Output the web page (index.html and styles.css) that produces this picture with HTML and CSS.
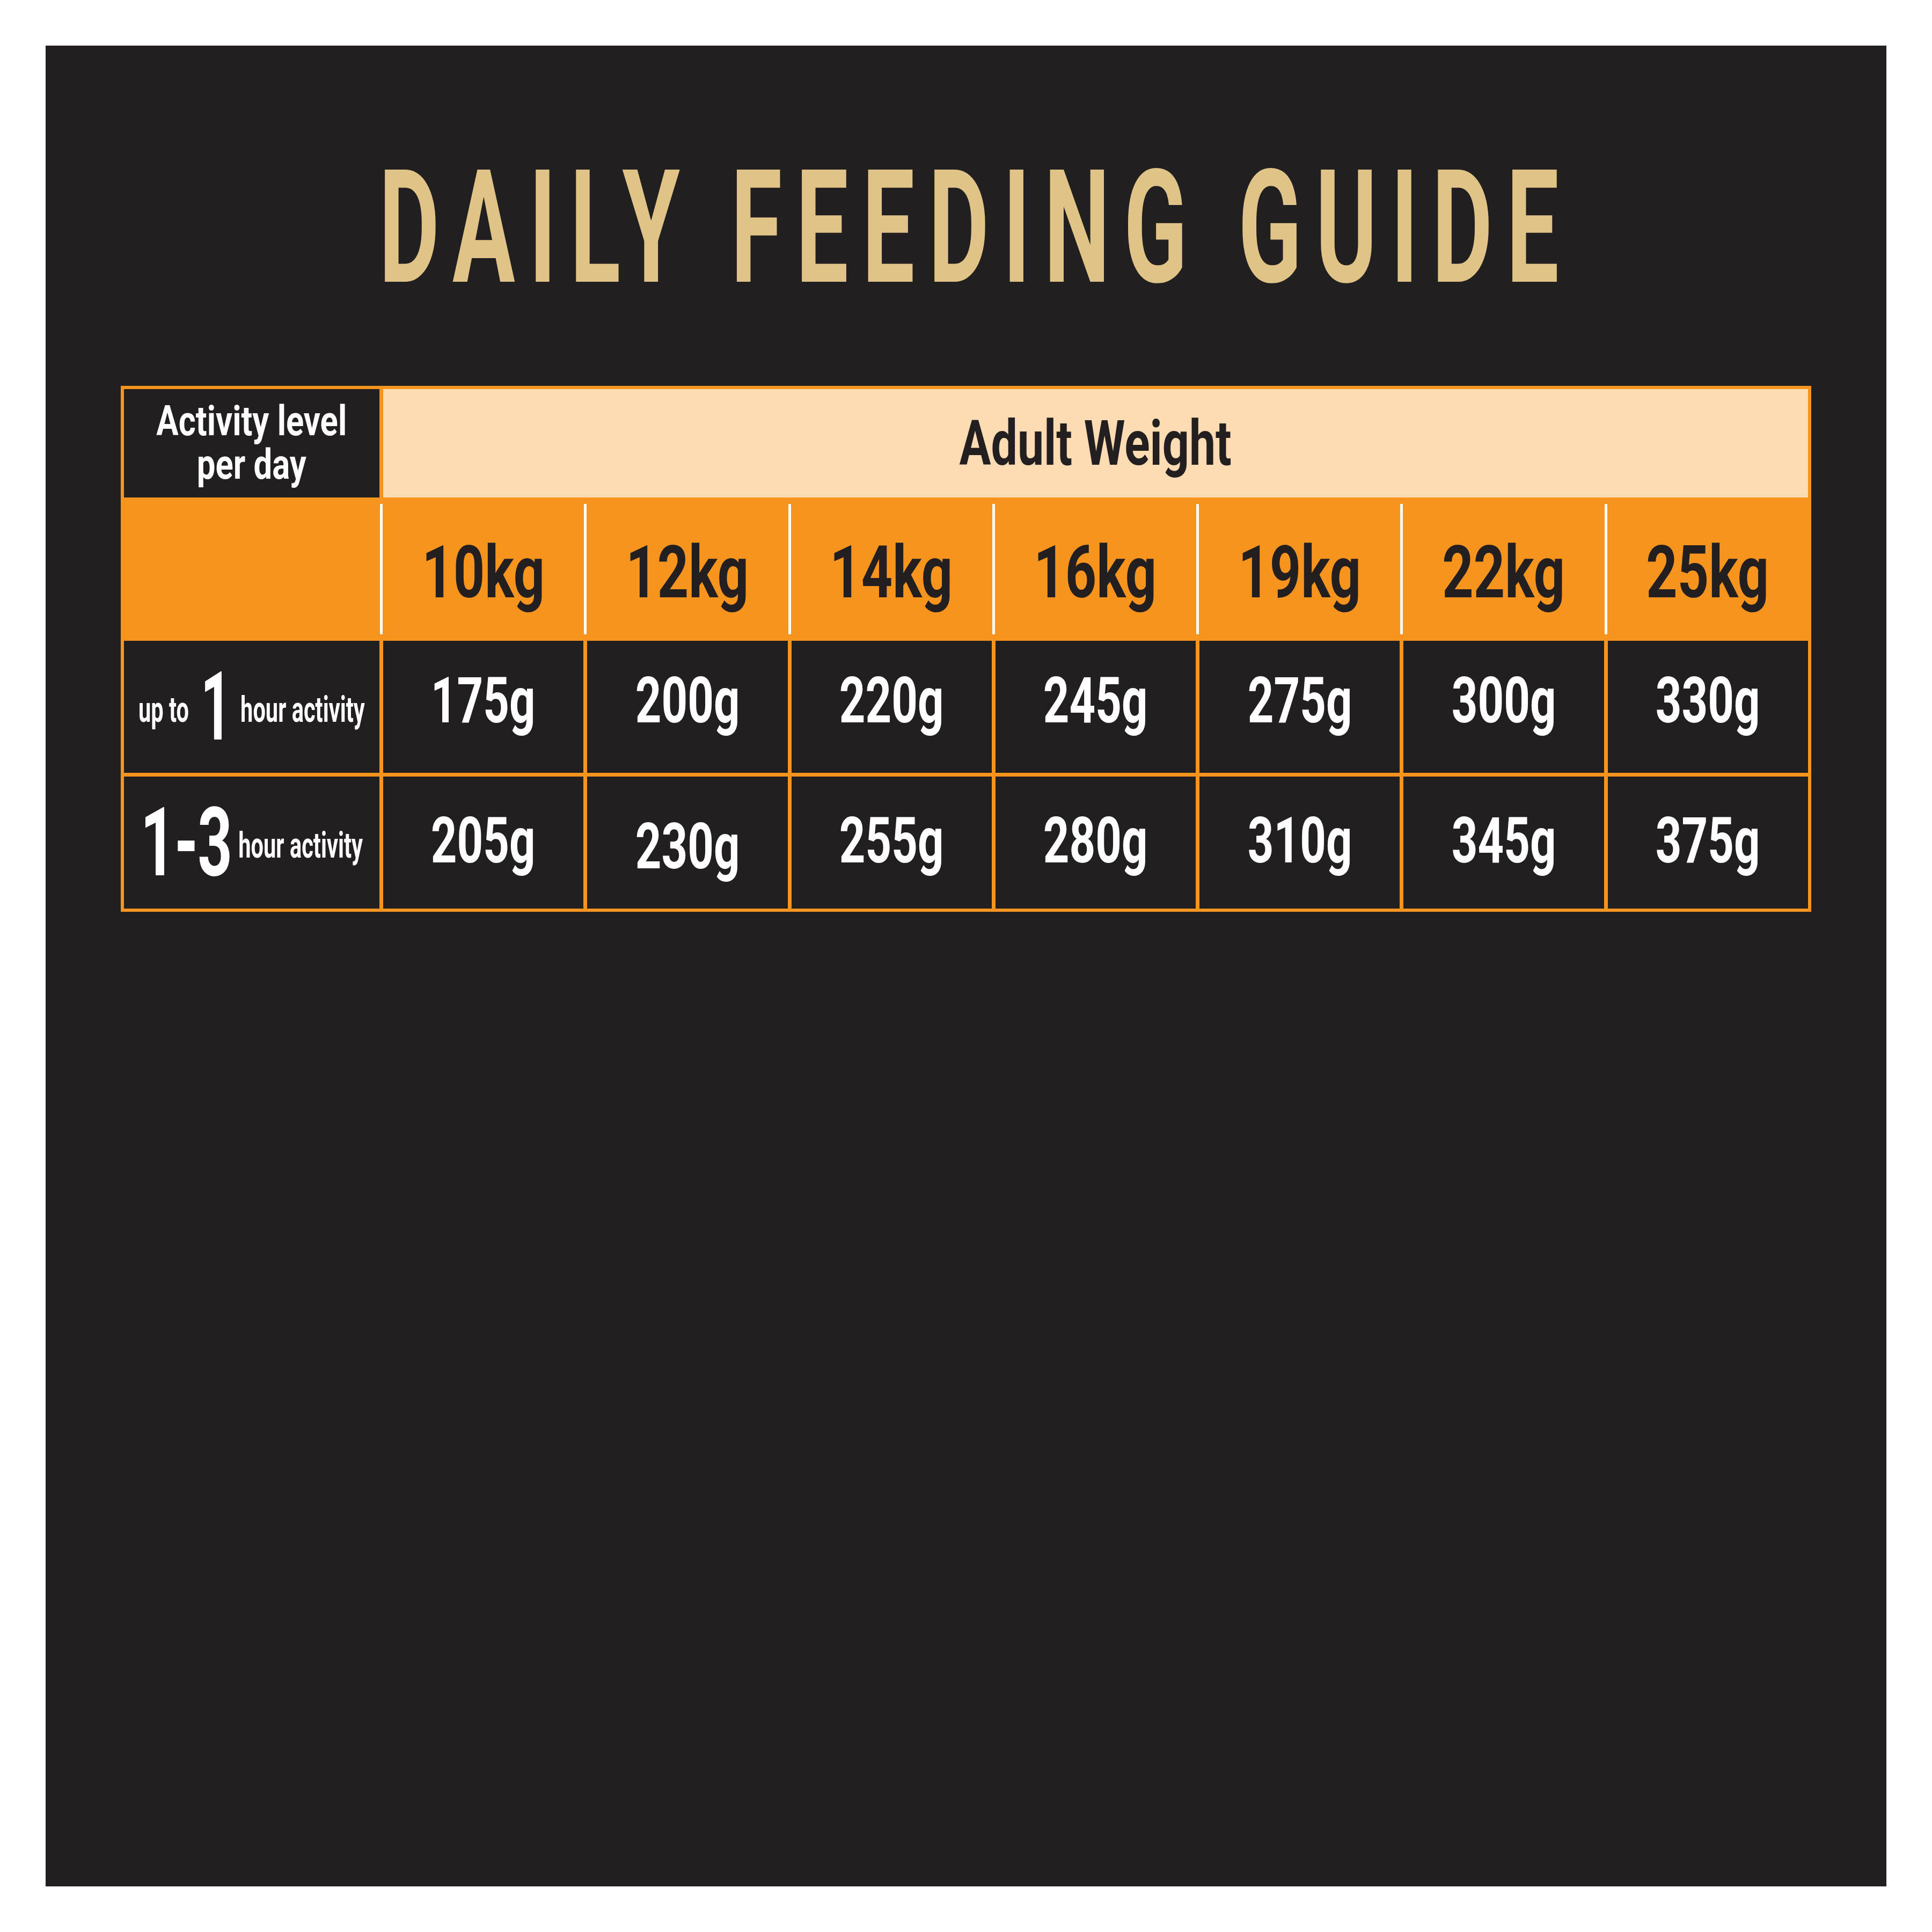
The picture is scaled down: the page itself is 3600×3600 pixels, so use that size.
FILE: index.html
```html
<!DOCTYPE html>
<html lang="en">
<head>
<meta charset="utf-8">
<title>Daily Feeding Guide</title>
<link rel="stylesheet" href="styles.css">
</head>
<body>
<div class="poster">
  <h1 class="title"><span class="title-text">DAILY FEEDING GUIDE</span></h1>
  <div class="guide">
    <div class="cell head-activity"><span class="t-activity">Activity level<br>per day</span></div>
    <div class="cell head-weight"><span class="t-weight">Adult Weight</span></div>

    <div class="cell kg-blank"></div>
    <div class="cell kg"><span class="t-kg">10kg</span></div>
    <div class="cell kg"><span class="t-kg">12kg</span></div>
    <div class="cell kg"><span class="t-kg">14kg</span></div>
    <div class="cell kg"><span class="t-kg">16kg</span></div>
    <div class="cell kg"><span class="t-kg">19kg</span></div>
    <div class="cell kg"><span class="t-kg">22kg</span></div>
    <div class="cell kg"><span class="t-kg">25kg</span></div>

    <div class="cell label"><span class="label-group one"><span class="sm">up to</span><span class="big">1</span><span class="sm">hour activity</span></span></div>
    <div class="cell val r1"><span class="t-val">175g</span></div>
    <div class="cell val r1"><span class="t-val">200g</span></div>
    <div class="cell val r1"><span class="t-val">220g</span></div>
    <div class="cell val r1"><span class="t-val">245g</span></div>
    <div class="cell val r1"><span class="t-val">275g</span></div>
    <div class="cell val r1"><span class="t-val">300g</span></div>
    <div class="cell val r1"><span class="t-val">330g</span></div>

    <div class="cell label"><span class="label-group two"><span class="big range">1-3</span><span class="sm">hour activity</span></span></div>
    <div class="cell val r2"><span class="t-val">205g</span></div>
    <div class="cell val r2 low"><span class="t-val">230g</span></div>
    <div class="cell val r2"><span class="t-val">255g</span></div>
    <div class="cell val r2"><span class="t-val">280g</span></div>
    <div class="cell val r2"><span class="t-val">310g</span></div>
    <div class="cell val r2"><span class="t-val">345g</span></div>
    <div class="cell val r2"><span class="t-val">375g</span></div>
  </div>
</div>
</body>
</html>
```
FILE: styles.css
```css
* { box-sizing: border-box; }

html, body {
  margin: 0;
  padding: 0;
  background: #ffffff;
}

body {
  font-family: Roboto, "Liberation Sans", Arial, sans-serif;
  font-weight: 700;
}

.poster {
  margin: 85px;
  width: 3430px;
  height: 3430px;
  background: #221f20;
  padding-top: 193px;
  overflow: hidden;
}

.title {
  margin: 0;
  display: flex;
  justify-content: center;
  font-size: 294px;
  line-height: 1;
  font-weight: 700;
  color: #dfc387;
  white-space: nowrap;
}

.title-text {
  display: inline-block;
  padding-left: 62px;
  letter-spacing: 44px;
  transform: scaleX(0.59);
}

.guide {
  margin: 147px 140px 0;
  display: grid;
  grid-template-columns: 476px repeat(7, 1fr);
  grid-template-rows: 202px 253px 246px 246px;
  gap: 7px;
  padding: 6px;
  background: #f7941e;
}

.cell {
  display: flex;
  align-items: center;
  justify-content: center;
  white-space: nowrap;
  min-width: 0;
}

.cell > span {
  flex: none;
}

.head-activity {
  background: #221f20;
  color: #ffffff;
}

.t-activity {
  display: inline-block;
  font-size: 77px;
  line-height: 81px;
  text-align: center;
  transform: scaleX(0.8);
}

.head-weight {
  grid-column: 2 / span 7;
  background: #fddbb3;
  color: #231f20;
}

.t-weight {
  display: inline-block;
  font-size: 117px;
  line-height: 1;
  transform: scaleX(0.75);
}

.kg {
  margin: 5px 0 5px -6px;
  border-left: 5px solid #ffffff;
  padding-top: 12px;
  color: #231f20;
}

.t-kg {
  display: inline-block;
  font-size: 136px;
  line-height: 1;
  transform: scaleX(0.75);
}

.label,
.val {
  background: #221f20;
  color: #ffffff;
}

.label-group {
  display: inline-flex;
  align-items: center;
  transform: scaleX(0.63);
}

.label-group.one {
  gap: 29px;
}

.label-group.one .big {
  margin-right: -8px;
  transform: scaleX(0.88);
}

.label-group.two {
  gap: 20px;
}

.sm {
  font-size: 66px;
  line-height: 1;
  padding-top: 12px;
}

.big {
  font-size: 179px;
  line-height: 1;
}

.range {
  letter-spacing: -2px;
}

.t-val {
  display: inline-block;
  font-size: 118px;
  line-height: 1;
  transform: scaleX(0.72);
}

.r1 {
  padding-bottom: 22px;
}

.r2 {
  padding-bottom: 6px;
}

.r2.low {
  padding-bottom: 0;
  padding-top: 16px;
}
```
